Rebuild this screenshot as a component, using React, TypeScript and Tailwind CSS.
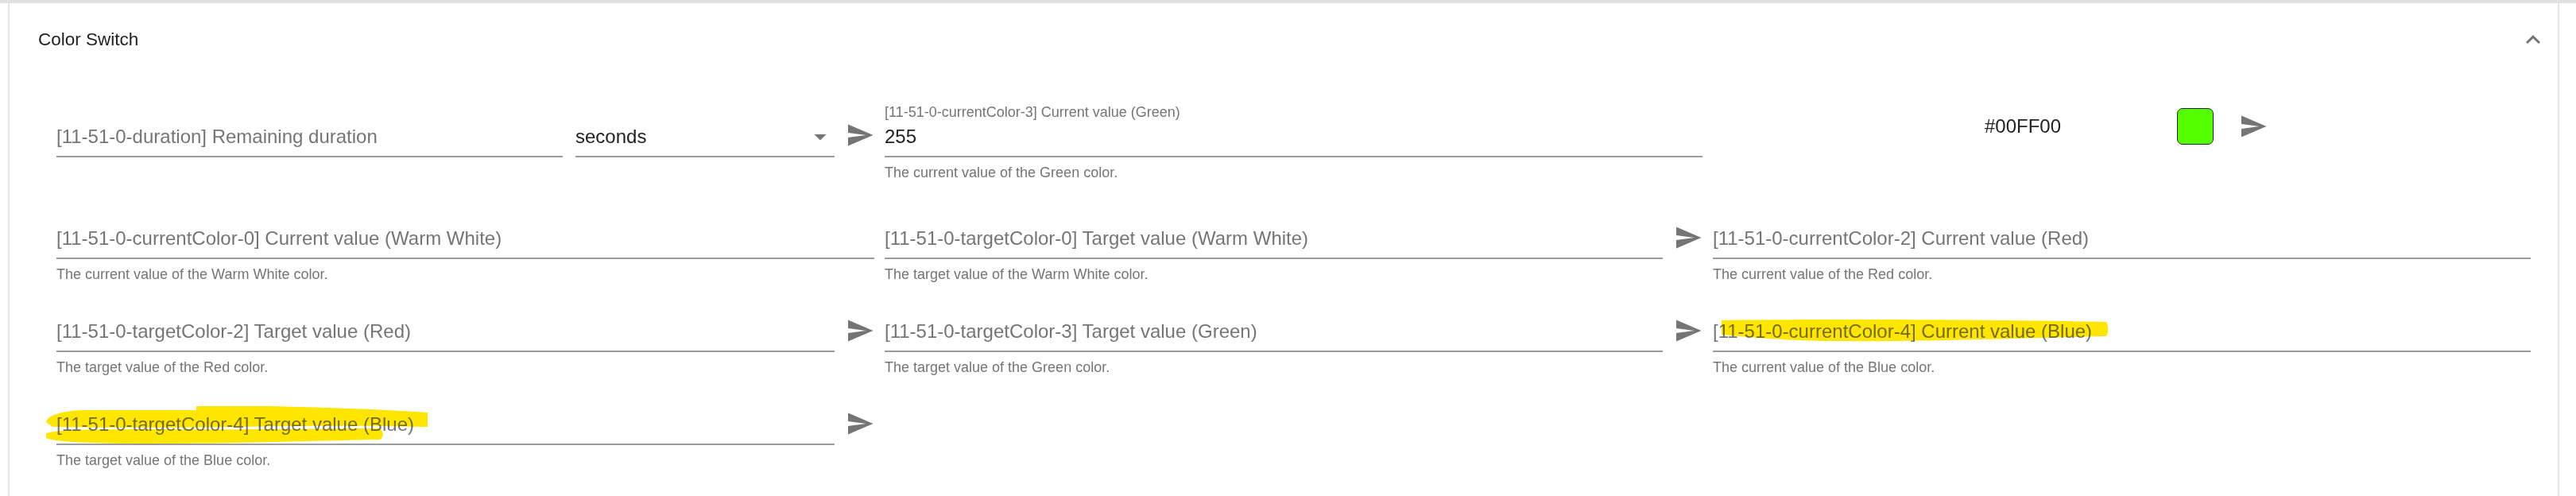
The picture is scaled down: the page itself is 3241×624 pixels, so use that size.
import React from "react";

const SendIcon = () => (
  <svg viewBox="0 0 24 24" className="w-[36px] h-[36px] fill-[#757575]">
    <path d="M2.01 21 23 12 2.01 3 2 10l15 2-15 2z" />
  </svg>
);

const SendButton = ({ className = "" }: { className?: string }) => (
  <button type="button" className={`shrink-0 w-[36px] h-[36px] p-0 ${className}`}>
    <SendIcon />
  </button>
);

type FieldProps = {
  label: string;
  helper?: string;
  value?: string;
  send?: boolean;
};

function Field({ label, helper, value, send }: FieldProps) {
  return (
    <div className="flex items-start">
      <div className="flex-1 min-w-0">
        {value ? (
          <div>
            <div className="text-[18px] leading-[18px] text-[#757575] whitespace-nowrap">{label}</div>
            <div className="mt-[10px] mb-[12px] text-[24px] leading-[24px] text-[#212121]">{value}</div>
          </div>
        ) : (
          <div className="h-[48px] flex items-center text-[24px] text-[#757575] whitespace-nowrap">
            {label}
          </div>
        )}
        <div className="h-[2px] bg-[#9b9b9b]" />
        {helper && (
          <div className="mt-[7px] text-[18px] leading-[24px] text-[#757575] whitespace-nowrap">
            {helper}
          </div>
        )}
      </div>
      {send && <SendButton className="ml-[14px] mt-[5px]" />}
    </div>
  );
}

function DurationControl() {
  return (
    <div className="flex items-start mt-[16px]">
      <div className="w-[637px] shrink-0">
        <div className="h-[48px] flex items-center text-[24px] text-[#757575] whitespace-nowrap">
          [11-51-0-duration] Remaining duration
        </div>
        <div className="h-[2px] bg-[#9b9b9b]" />
      </div>
      <div className="flex-1 ml-[16px]">
        <div className="h-[48px] flex items-center justify-between text-[24px] text-[#212121]">
          <span>seconds</span>
          <svg viewBox="0 0 24 24" className="w-[36px] h-[36px] fill-[#757575]">
            <path d="M7 10l5 5 5-5z" />
          </svg>
        </div>
        <div className="h-[2px] bg-[#9b9b9b]" />
      </div>
      <SendButton className="ml-[14px] mt-[4px]" />
    </div>
  );
}

function ColorPicker() {
  return (
    <div className="mt-[16px] h-[22px] flex items-center">
      <span className="ml-[342px] text-[24px] leading-[24px] text-[#222222]">#00FF00</span>
      <div className="ml-[146px] w-[46px] h-[46px] shrink-0 rounded-[7px] border-[1.5px] border-[#222222] bg-[#55ff00]" />
      <SendButton className="ml-[32px]" />
    </div>
  );
}

export default function App() {
  return (
    <div
      className="relative w-full min-h-[624px] bg-white overflow-hidden"
      style={{ fontFamily: '"Liberation Sans", Arial, sans-serif' }}
    >
      <div className="h-[4px] bg-[#e2e2e2]" />
      <div className="ml-[10px] w-[3210px] min-h-[620px] border-l-2 border-r-2 border-[#e6e6e6]">
        {/* accordion summary */}
        <div className="h-[92px] flex items-center justify-between pl-[36px] pr-[13px]">
          <span className="text-[22.5px] text-[#212121]">Color Switch</span>
          <svg viewBox="0 0 24 24" className="w-[36px] h-[36px] fill-[#757575]">
            <path d="M12 8l-6 6 1.41 1.41L12 10.83l4.59 4.58L18 14z" />
          </svg>
        </div>

        {/* accordion details */}
        <div className="pt-[36px] pl-[59px] pb-[33px]">
          <div className="grid grid-cols-[repeat(3,1029px)] items-start gap-x-[13px] mb-[47px]">
            <DurationControl />
            <Field
              label="[11-51-0-currentColor-3] Current value (Green)"
              value="255"
              helper="The current value of the Green color."
            />
            <ColorPicker />
          </div>

          <div className="grid grid-cols-[repeat(3,1029px)] gap-x-[13px] gap-y-[36px]">
            <Field
              label="[11-51-0-currentColor-0] Current value (Warm White)"
              helper="The current value of the Warm White color."
            />
            <Field
              label="[11-51-0-targetColor-0] Target value (Warm White)"
              helper="The target value of the Warm White color."
              send
            />
            <Field
              label="[11-51-0-currentColor-2] Current value (Red)"
              helper="The current value of the Red color."
            />
            <Field
              label="[11-51-0-targetColor-2] Target value (Red)"
              helper="The target value of the Red color."
              send
            />
            <Field
              label="[11-51-0-targetColor-3] Target value (Green)"
              helper="The target value of the Green color."
              send
            />
            <Field
              label="[11-51-0-currentColor-4] Current value (Blue)"
              helper="The current value of the Blue color."
            />
            <Field
              label="[11-51-0-targetColor-4] Target value (Blue)"
              helper="The target value of the Blue color."
              send
            />
          </div>
        </div>
      </div>

      {/* highlighter marks drawn over the labels */}
      <svg
        className="pointer-events-none absolute inset-0 w-full h-full mix-blend-multiply"
        viewBox="0 0 3241 624"
        preserveAspectRatio="none"
      >
        <g fill="#ffe600">
          <path d="M58 531 C60 522 80 516 110 516 L247 516 L247 511 L340 511 C420 513 480 515 538 519 L538 537 C450 535 380 536 300 537 C200 538 120 538 66 537 Z" />
          <path d="M58 546 C62 541 100 540 200 540 C300 541 400 539 478 539 C483 543 483 550 478 553 C380 555 250 559 150 558 C100 557 65 555 58 551 Z" />
          <path d="M2166 403 C2300 401 2500 402 2650 405 C2653 411 2653 418 2650 423 C2550 425 2420 430 2300 429 C2240 428 2200 424 2166 421 Z" />
        </g>
      </svg>
    </div>
  );
}
